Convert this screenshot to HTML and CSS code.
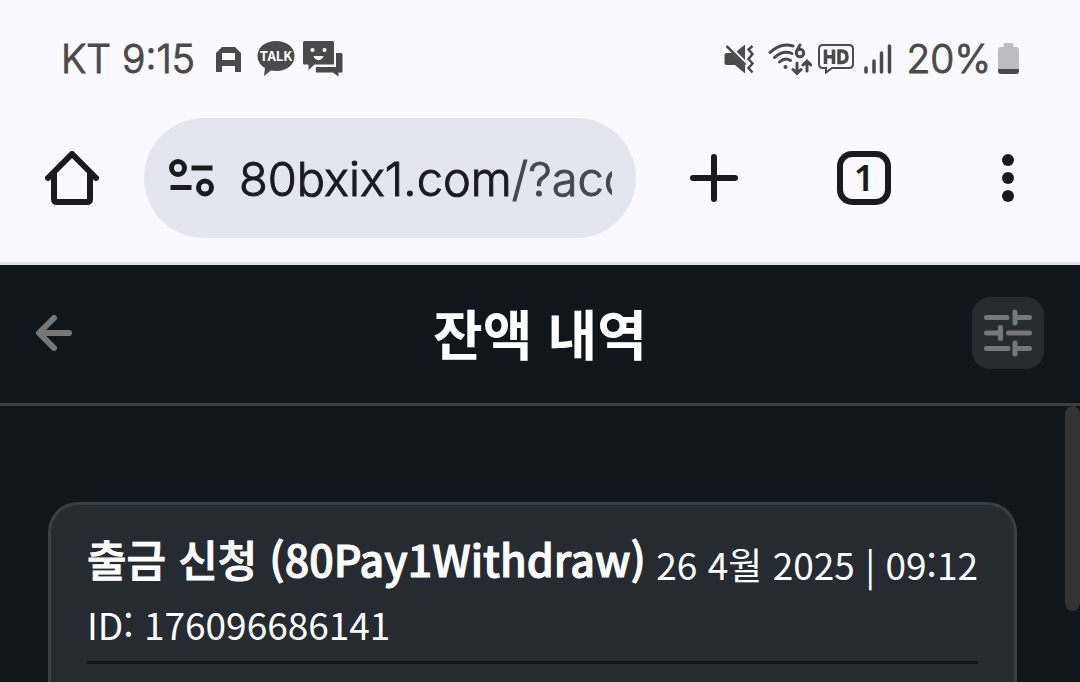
FILE: index.html
```
<!DOCTYPE html>
<html lang="ko">
  <head>
    <meta charset="utf-8" />
    <meta name="viewport" content="width=device-width, initial-scale=1" />
    <title>잔액 내역</title>
    <link rel="stylesheet" href="styles.css" />
  </head>

  <body>
    <div class="status-bar">
      <div class="status-left">
        <span class="carrier">KT 9:15</span>
        <svg class="icon-a" width="25" height="25" viewBox="0 0 25 25">
          <path d="M6 0H19L25 6V25H19V19H6V25H0V6ZM6 6V13H19V6Z" fill="#4a4a4a" fill-rule="evenodd" />
        </svg>
        <svg class="icon-talk" width="38" height="36" viewBox="0 0 38 36">
          <path d="M19 0C8 0 .5 6.500 .5 15C.5 20 3.500 24.500 8 27L7 35L14 29.500C29 32 37.500 24 37.500 15C37.500 6.500 30 0 19 0Z" fill="#4a4a4a" />
          <text x="19" y="20" text-anchor="middle" class="talk-text">TALK</text>
        </svg>
        <svg class="icon-chat" width="40" height="36" viewBox="0 0 40 36">
          <path d="M33 12H38Q39.500 12 39.500 13.500V31.500H35.500V35.500L30 31.500H13V26H33Z" fill="#4a4a4a" />
          <path d="M1.500 0H29.500Q31 0 31 1.500V23.500H11.500L5.500 29V23.500H1.500Q0 23.500 0 22V1.500Q0 0 1.500 0Z" fill="#4a4a4a" />
          <circle cx="9.500" cy="9" r="2" fill="#fff" />
          <circle cx="21.500" cy="9" r="2" fill="#fff" />
          <path d="M10.500 15H20.500C19.500 20.500 11.500 20.500 10.500 15Z" fill="#fff" />
        </svg>
      </div>

      <div class="status-right">
        <svg width="32" height="30" viewBox="0 0 32 30">
          <path d="M2.500 9H8L21 22V29.500L11 21H2.500Q.5 21 .5 19V11Q.5 9 2.500 9ZM21 .5V16L12.500 7.500Z" fill="#4a4a4a" />
          <path d="M2.500 2L21.500 21" fill="none" stroke="#4a4a4a" stroke-width="2.500" />
          <path d="M28.500 2L24.500 5.500L28.500 10L24.500 15L28.500 19.500L24.500 24L28.500 28.500" fill="none" stroke="#4a4a4a" stroke-width="2.500" />
        </svg>
        <svg class="icon-wifi" width="44" height="34" viewBox="0 0 44 34">
          <g fill="none" stroke="#4a4a4a" stroke-width="3" stroke-linecap="round">
            <path d="M2 10.500Q13 0 25 4" />
            <path d="M6.500 15.500Q15 7.500 24 11.500" />
            <path d="M11.500 20Q17 15 22.500 18.500" />
            <circle cx="32" cy="11" r="3.700" />
            <path d="M28.500 9.500L32 3" />
            <path d="M29 21V31M25 27.500L29 31.500L33 27.500M39 29V19M35 23L39 19L43 23" />
          </g>
          <circle cx="17.500" cy="25" r="2" fill="#4a4a4a" />
        </svg>
        <svg class="icon-hd" width="36" height="30" viewBox="0 0 36 30">
          <path d="M5 1H31Q35 1 35 5V20Q35 24 31 24H14L8 28.500V24H5Q1 24 1 20V5Q1 1 5 1Z" fill="none" stroke="#4a4a4a" stroke-width="2" />
          <path d="M7.500 5.500V20M15.500 5.500V20M7.500 12.700H15.500M21 7V18.500H23.500Q29 18.500 29 12.700Q29 7 23.500 7Z" fill="none" stroke="#4a4a4a" stroke-width="3.500" />
        </svg>
        <svg class="icon-signal" width="28" height="30" viewBox="0 0 28 30">
          <path d="M2 24V28M10 17V28M17.500 9V28M25.500 2V28" fill="none" stroke="#4a4a4a" stroke-width="3.500" stroke-linecap="round" />
        </svg>
        <span class="battery-level">20%</span>
        <svg width="21" height="32" viewBox="0 0 21 32">
          <path d="M7 0H14Q15.500 0 15.500 1.500V4H18Q21 4 21 7V26H0V7Q0 4 3 4H5.500V1.500Q5.500 0 7 0Z" fill="#bdbdbf" />
          <path d="M0 26H21V28Q21 31 18 31H3Q0 31 0 28Z" fill="#4a4a4a" />
        </svg>
      </div>
    </div>

    <div class="toolbar">
      <button type="button" class="tool-button" aria-label="Home">
        <svg width="54" height="54" viewBox="0 0 54 54">
          <path d="M3 27L27 3L51 27M9 21V48Q9 51 12 51H42Q45 51 45 48V21" fill="none" stroke="#1b1b1f" stroke-width="6" stroke-linecap="round" />
        </svg>
      </button>

      <div class="address-bar">
        <svg width="46" height="38" viewBox="0 0 46 38">
          <g fill="none" stroke="#1b1b1f" stroke-width="5">
            <circle cx="9" cy="9" r="6.500" />
            <circle cx="36" cy="28.500" r="6.500" />
            <path d="M22.500 9H43.500M1.500 28.500H22.500" />
          </g>
        </svg>
        <input type="text" class="address" value="80bxix1.com/?acco" aria-label="Address" />
      </div>

      <button type="button" class="tool-button new-tab" aria-label="New tab">
        <svg width="48" height="48" viewBox="0 0 48 48">
          <path d="M24 3V45M3 24H45" stroke="#1b1b1f" stroke-width="6" stroke-linecap="round" />
        </svg>
      </button>
      <button type="button" class="tool-button" aria-label="Tabs">
        <span class="tab-count">1</span>
      </button>
      <button type="button" class="tool-button" aria-label="Menu">
        <svg width="12" height="48" viewBox="0 0 12 48" fill="#1b1b1f">
          <circle cx="6" cy="6" r="6" />
          <circle cx="6" cy="24" r="6" />
          <circle cx="6" cy="42" r="6" />
        </svg>
      </button>
    </div>

    <header class="page-header">
      <button type="button" class="back-button" aria-label="뒤로">
        <svg width="36" height="36" viewBox="0 0 36 36">
          <path d="M33 18H4M18 3L3 18L18 33" fill="none" stroke="#777" stroke-width="6" stroke-linecap="round" stroke-linejoin="round" />
        </svg>
      </button>
      <h1>잔액 내역</h1>
      <button type="button" class="filter-button" aria-label="필터">
        <svg width="48" height="48" viewBox="0 0 48 48">
          <path d="M2.500 8.500H23M31 8.500H45.500M31 3V14M2.500 24H16.500M16.500 18.500V29.500M24.500 24H45.500M2.500 39.500H24M31 39.500H45.500M31 34V45" fill="none" stroke="#777" stroke-width="5" stroke-linecap="round" />
        </svg>
      </button>
    </header>

    <main class="content">
      <article class="card">
        <div class="card-top">
          <h2>출금 신청 (80Pay1Withdraw)</h2>
          <time datetime="2025-04-26T09:12">26 4월 2025 | 09:12</time>
        </div>
        <p class="card-id">ID: 176096686141</p>
      </article>
      <div class="scroll-thumb"></div>
    </main>
  </body>
</html>
```
FILE: styles.css
```
* {
  box-sizing: border-box;
}

body {
  margin: 0;
  height: 100vh;
  overflow: hidden;
  display: flex;
  flex-direction: column;
  background: #0f161c;
  color: #fff;
  font-family: "Noto Sans CJK KR", sans-serif;
}

button {
  display: flex;
  align-items: center;
  justify-content: center;
  flex: none;
  padding: 0;
  border: none;
  background: none;
  cursor: pointer;
}

svg {
  display: block;
  flex: none;
}

/* phone status bar */
.status-bar {
  display: flex;
  justify-content: space-between;
  flex: none;
  height: 118px;
  padding: 0 61px;
  background: #faf9ff;
  color: #4a4a4a;
  font-family: Inter, sans-serif;
  font-size: 39px;
  font-weight: 300;
  line-height: 118px;
}

.status-left,
.status-right {
  display: flex;
  align-items: center;
}

.carrier,
.battery-level {
  -webkit-text-stroke: 1px #4a4a4a;
}

.icon-a {
  margin: 0 16px 0 21px;
}

.icon-chat {
  margin-left: 8px;
}

.talk-text {
  fill: #fff;
  font-family: "Noto Sans CJK KR", sans-serif;
  font-size: 13px;
  font-weight: 700;
}

.icon-wifi {
  margin: 0 6px 0 12px;
}

.icon-signal {
  margin: 0 14px 0 10px;
}

.battery-level {
  margin-right: 7px;
}

/* browser toolbar */
.toolbar {
  display: flex;
  flex: none;
  padding-bottom: 24px;
  border-bottom: 3px solid #e2e4ea;
  background: #faf9ff;
  color: #1b1b1f;
}

.tool-button {
  width: 144px;
  height: 120px;
}

.address-bar {
  display: flex;
  align-items: center;
  gap: 24px;
  flex: 1;
  min-width: 0;
  margin-right: 6px;
  padding: 0 24px 0 25px;
  border-radius: 60px;
  background: #e3e6ef;
}

/* host is darker than the path */
.address {
  flex: 1;
  min-width: 0;
  height: 72px;
  padding: 0;
  border: none;
  outline: none;
  background: linear-gradient(to right, #1b1b1f 271px, #44474e 271px);
  -webkit-background-clip: text;
  background-clip: text;
  color: transparent;
  font-family: Inter, sans-serif;
  font-size: 47px;
  font-weight: 300;
  -webkit-text-stroke: 1px transparent;
}

.new-tab {
  margin-right: 6px;
}

.tab-count {
  width: 54px;
  height: 54px;
  border: 6px solid #1b1b1f;
  border-radius: 15px;
  color: #1b1b1f;
  font-family: "Noto Sans", sans-serif;
  font-size: 36px;
  font-weight: 600;
  line-height: 42px;
}

/* page */
.page-header {
  display: flex;
  align-items: center;
  justify-content: space-between;
  flex: none;
  height: 141px;
  padding: 0 36px 2px;
  border-bottom: 3px solid #3c3e40;
}

.back-button {
  justify-content: flex-start;
  width: 72px;
  height: 72px;
}

h1 {
  margin: 0;
  font-size: 54px;
  font-weight: 700;
  line-height: 72px;
}

.filter-button {
  width: 72px;
  height: 72px;
  border-radius: 18px;
  background: #262b31;
}

.content {
  position: relative;
  flex: 1;
  min-height: 0;
  padding: 96px 63px 0 48px;
}

.card {
  padding: 23px 36px 60px;
  border: 3px solid #3c3e40;
  border-radius: 30px;
  background: #262b31;
}

.card-top {
  display: flex;
  justify-content: space-between;
  white-space: nowrap;
}

h2 {
  margin: 0;
  font-size: 43px;
  font-weight: 500;
  line-height: 60px;
  -webkit-text-stroke: 1px #fff;
}

time,
.card-id {
  font-size: 37px;
  line-height: 60px;
}

time {
  margin-top: 6px;
}

.card-id {
  margin: 0;
  padding-bottom: 7px;
  border-bottom: 3px solid #0f161c;
}

.scroll-thumb {
  position: absolute;
  top: 0;
  right: 0;
  width: 15px;
  height: 205px;
  border-radius: 8px;
  background: #333;
}
```
